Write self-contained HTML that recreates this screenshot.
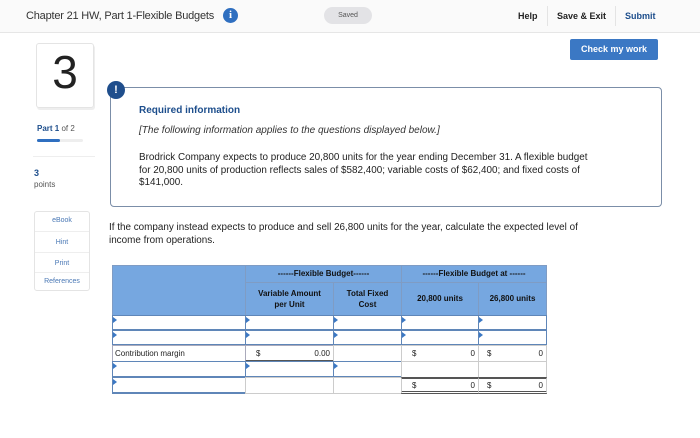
<!DOCTYPE html>
<html><head><style>
*{margin:0;padding:0;box-sizing:border-box}
body{width:700px;height:438px;background:#fff;font-family:"Liberation Sans",sans-serif;position:relative;overflow:hidden;color:#222}
.a{position:absolute}
.top{left:0;top:0;width:700px;height:33px;background:#fafafa;border-bottom:1px solid #e6e6e6}
.cell{position:absolute;border:1px solid #7f9cc4}
.hd{background:#76a7e0;font-weight:bold;font-size:8px;text-align:center;color:#111}
.in{background:#fff;border:1px solid #5f86b8;border-width:1px 1px 2px 1px}
.mk{position:absolute;left:0;top:1px;width:0;height:0;border-top:3px solid transparent;border-bottom:3px solid transparent;border-left:4px solid #3b78c4}
.t8{font-size:8px}
</style></head><body>
<div class="a top"></div>
<div class="a" style="left:26px;top:10px;font-size:11px;color:#333;letter-spacing:-0.2px">Chapter 21 HW, Part 1-Flexible Budgets</div>
<div class="a" style="left:223px;top:8px;width:15px;height:15px;border-radius:50%;background:#2f6fc0;color:#fff;font-size:11px;font-weight:bold;text-align:center;line-height:15px;font-family:'Liberation Serif',serif">i</div>
<div class="a" style="left:324px;top:7px;width:48px;height:17px;border-radius:9px;background:#e3e3e6;font-size:7px;color:#555;text-align:center;line-height:17px">Saved</div>
<div class="a" style="left:518px;top:11px;font-size:9px;font-weight:bold;color:#222">Help</div>
<div class="a" style="left:547px;top:6px;width:1px;height:20px;background:#e4e4e4"></div>
<div class="a" style="left:557px;top:11px;font-size:9px;font-weight:bold;color:#222">Save &amp; Exit</div>
<div class="a" style="left:615px;top:6px;width:1px;height:20px;background:#e4e4e4"></div>
<div class="a" style="left:625px;top:11px;font-size:9px;font-weight:bold;color:#1d4e8c">Submit</div>
<div class="a" style="left:570px;top:39px;width:88px;height:21px;background:#3b78c4;border-radius:2px;color:#fff;font-size:9px;font-weight:bold;text-align:center;line-height:21px">Check my work</div>
<div class="a" style="left:36px;top:43px;width:58px;height:65px;border:1px solid #e4e4e4;border-radius:3px;box-shadow:1px 2px 0 #eee"></div>
<div class="a" style="left:36px;top:46px;width:58px;text-align:center;font-size:46px;color:#222;line-height:52px">3</div>
<div class="a" style="left:110px;top:87px;width:552px;height:120px;border:1px solid #7b8ea8;border-radius:4px"></div>
<div class="a" style="left:107px;top:81px;width:18px;height:18px;border-radius:50%;background:#1f4e8c;color:#fff;font-size:11px;font-weight:bold;text-align:center;line-height:18px">!</div>
<div class="a" style="left:139px;top:105px;font-size:10px;font-weight:bold;color:#1d4e8c">Required information</div>
<div class="a" style="left:139px;top:125px;font-size:10px;font-style:italic;color:#333">[The following information applies to the questions displayed below.]</div>
<div class="a" style="left:139px;top:152px;width:462px;font-size:9.9px;line-height:12.5px;color:#222">Brodrick Company expects to produce 20,800 units for the year ending December 31. A flexible budget for 20,800 units of production reflects sales of $582,400; variable costs of $62,400; and fixed costs of $141,000.</div>
<div class="a" style="left:37px;top:124px;font-size:8px;color:#555"><b style="color:#1d4e8c">Part 1</b> of 2</div>
<div class="a" style="left:37px;top:139px;width:46px;height:3px;background:#eee;border-radius:2px"><div style="width:23px;height:3px;background:#2f6fc0;border-radius:2px"></div></div>
<div class="a" style="left:33px;top:156px;width:62px;height:1px;background:#eee"></div>
<div class="a" style="left:34px;top:168px;font-size:9px;font-weight:bold;color:#1d4e8c">3</div>
<div class="a" style="left:34px;top:180px;font-size:8px;color:#555">points</div>
<div class="a" style="left:34px;top:211px;width:56px;height:80px;border:1px solid #e4e4e4;border-radius:3px;font-size:7px;color:#4a78b5;text-align:center">
<div style="height:20px;line-height:18px;border-bottom:1px solid #eee">eBook</div>
<div style="height:21px;line-height:21px;border-bottom:1px solid #eee">Hint</div>
<div style="height:20px;line-height:22px;border-bottom:1px solid #eee">Print</div>
<div style="line-height:18px">References</div></div>
<div class="a" style="left:109px;top:222px;width:485px;font-size:9.9px;line-height:12.5px;color:#222">If the company instead expects to produce and sell 26,800 units for the year, calculate the expected level of income from operations.</div>

<div class="cell hd" style="left:112px;top:265px;width:134px;height:51px"></div>
<div class="cell hd" style="left:245px;top:265px;width:157px;height:18px;line-height:16px">------Flexible Budget------</div>
<div class="cell hd" style="left:401px;top:265px;width:146px;height:18px;line-height:16px">------Flexible Budget at ------</div>
<div class="cell hd" style="left:245px;top:282px;width:89px;height:34px;padding-top:5px;line-height:11px">Variable Amount<br>per Unit</div>
<div class="cell hd" style="left:333px;top:282px;width:69px;height:34px;padding-top:5px;line-height:11px">Total Fixed<br>Cost</div>
<div class="cell hd" style="left:401px;top:282px;width:78px;height:34px;line-height:32px">20,800 units</div>
<div class="cell hd" style="left:478px;top:282px;width:69px;height:34px;line-height:32px">26,800 units</div>

<div class="cell in" style="left:112px;top:315px;width:134px;height:16px"><i class="mk"></i></div>
<div class="cell in" style="left:245px;top:315px;width:89px;height:16px"><i class="mk"></i></div>
<div class="cell in" style="left:333px;top:315px;width:69px;height:16px"><i class="mk"></i></div>
<div class="cell in" style="left:401px;top:315px;width:78px;height:16px"><i class="mk"></i></div>
<div class="cell in" style="left:478px;top:315px;width:69px;height:16px"><i class="mk"></i></div>
<div class="cell in" style="left:112px;top:330px;width:134px;height:16px"><i class="mk"></i></div>
<div class="cell in" style="left:245px;top:330px;width:89px;height:16px"><i class="mk"></i></div>
<div class="cell in" style="left:333px;top:330px;width:69px;height:16px"><i class="mk"></i></div>
<div class="cell in" style="left:401px;top:330px;width:78px;height:16px"><i class="mk"></i></div>
<div class="cell in" style="left:478px;top:330px;width:69px;height:16px"><i class="mk"></i></div>

<div class="cell t8" style="left:112px;top:345px;width:134px;height:17px;border-color:#aab;padding:3px 2px">Contribution margin</div>
<div class="cell t8" style="left:245px;top:345px;width:89px;height:17px;border-color:#aab;border-bottom:2px solid #555;padding:3px 3px"><span style="margin-left:7px">$</span><span style="float:right">0.00</span></div>
<div class="cell" style="left:333px;top:345px;width:69px;height:17px;border-color:#ccc"></div>
<div class="cell t8" style="left:401px;top:345px;width:78px;height:17px;border-color:#ccc;padding:3px 3px"><span style="margin-left:7px">$</span><span style="float:right">0</span></div>
<div class="cell t8" style="left:478px;top:345px;width:69px;height:17px;border-color:#ccc;padding:3px 3px"><span style="margin-left:5px">$</span><span style="float:right">0</span></div>

<div class="cell in" style="left:112px;top:361px;width:134px;height:17px"><i class="mk"></i></div>
<div class="cell in" style="left:245px;top:361px;width:89px;height:17px"><i class="mk"></i></div>
<div class="cell in" style="left:333px;top:361px;width:69px;height:17px"><i class="mk"></i></div>
<div class="cell" style="left:401px;top:361px;width:78px;height:17px;border-color:#ccc"></div>
<div class="cell" style="left:478px;top:361px;width:69px;height:17px;border-color:#ccc"></div>
<div class="cell in" style="left:112px;top:377px;width:134px;height:17px"><i class="mk"></i></div>
<div class="cell" style="left:245px;top:377px;width:89px;height:17px;border-color:#ccc"></div>
<div class="cell" style="left:333px;top:377px;width:69px;height:17px;border-color:#ccc"></div>
<div class="cell t8" style="left:401px;top:377px;width:78px;height:17px;border-color:#ccc;border-top:2px solid #555;border-bottom:3px double #555;padding:2px 3px"><span style="margin-left:7px">$</span><span style="float:right">0</span></div>
<div class="cell t8" style="left:478px;top:377px;width:69px;height:17px;border-color:#ccc;border-top:2px solid #555;border-bottom:3px double #555;padding:2px 3px"><span style="margin-left:5px">$</span><span style="float:right">0</span></div>
</body></html>
